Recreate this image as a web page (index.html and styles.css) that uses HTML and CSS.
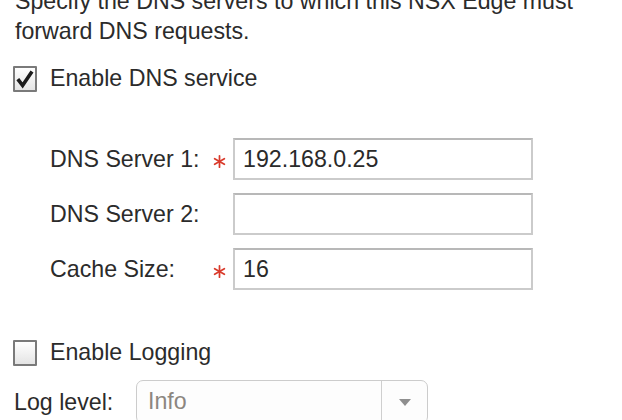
FILE: index.html
```html
<!DOCTYPE html>
<html>
<head>
<meta charset="utf-8">
<link rel="stylesheet" href="styles.css">
</head>
<body>
<div class="page">
  <p class="desc">Specify the DNS servers to which this NSX Edge must forward DNS requests.</p>

  <label class="check-row check-dns">
    <span class="box checked">
      <svg viewBox="0 0 20 20" width="20" height="20"><path d="M2.8 10.2 L7.6 16.4 L17 2.6" fill="none" stroke="#1b1b1b" stroke-width="3.6" stroke-linejoin="miter"/></svg>
    </span>
    <span>Enable DNS service</span>
  </label>

  <div class="form">
    <span class="lbl">DNS Server 1:</span>
    <span class="req"><svg viewBox="0 0 12 12" width="13" height="13"><g stroke="#d93a2b" stroke-width="1.6" stroke-linecap="round"><line x1="6" y1="0.8" x2="6" y2="11.2"/><line x1="1.5" y1="3.4" x2="10.5" y2="8.6"/><line x1="1.5" y1="8.6" x2="10.5" y2="3.4"/></g></svg></span>
    <div class="field">192.168.0.25</div>

    <span class="lbl">DNS Server 2:</span>
    <span class="req"></span>
    <div class="field"></div>

    <span class="lbl">Cache Size:</span>
    <span class="req"><svg viewBox="0 0 12 12" width="13" height="13"><g stroke="#d93a2b" stroke-width="1.6" stroke-linecap="round"><line x1="6" y1="0.8" x2="6" y2="11.2"/><line x1="1.5" y1="3.4" x2="10.5" y2="8.6"/><line x1="1.5" y1="8.6" x2="10.5" y2="3.4"/></g></svg></span>
    <div class="field">16</div>
  </div>

  <label class="check-row check-log">
    <span class="box"></span>
    <span>Enable Logging</span>
  </label>

  <div class="log-row">
    <span class="log-lbl">Log level:</span>
    <div class="select">
      <span class="sel-val">Info</span>
      <span class="sel-btn"><svg viewBox="0 0 12 8" width="12" height="8"><path d="M0 0 L12 0 L6 7 Z" fill="#8f8f8f"/></svg></span>
    </div>
  </div>
</div>
</body>
</html>
```
FILE: styles.css
```css
html, body {
  margin: 0;
  padding: 0;
  background: #ffffff;
}
.page {
  font-family: "Liberation Sans", Arial, sans-serif;
  font-size: 23.2px;
  color: #2b2b2b;
  overflow: hidden;
  height: 420px;
}
.desc {
  margin: -14px 0 0 0;
  padding-left: 15px;
  width: 590px;
  line-height: 30px;
}
.check-row {
  display: flex;
  align-items: center;
  gap: 13px;
  padding-left: 13px;
  height: 27px;
}
.check-dns {
  margin-top: 19px;
}
.box {
  box-sizing: border-box;
  width: 24px;
  height: 26px;
  border: 2px solid #7a7a7a;
  border-radius: 1px;
  background: linear-gradient(#ffffff, #e4e4e4);
  display: flex;
  align-items: center;
  justify-content: center;
}
.box svg {
  display: block;
}
.form {
  display: grid;
  grid-template-columns: 163px 20px 300px;
  row-gap: 13px;
  align-items: center;
  padding-left: 50px;
  margin-top: 46px;
}
.req {
  display: flex;
  align-items: center;
  height: 13px;
  margin-top: 4px;
}
.req svg {
  display: block;
}
.field {
  box-sizing: border-box;
  height: 42px;
  border: 2px solid #cbcbcb;
  border-top-color: #b8b8b8;
  padding-left: 8px;
  line-height: 38px;
  color: #2a2a2a;
}
.check-log {
  margin-top: 49px;
}
.log-row {
  display: flex;
  align-items: center;
  gap: 18px;
  padding-left: 14px;
  margin-top: 14px;
}
.log-lbl {
  width: 104px;
}
.select {
  box-sizing: border-box;
  width: 292px;
  height: 44px;
  border: 1.5px solid #cccccc;
  border-radius: 7px;
  display: flex;
  align-items: stretch;
  background: #fdfdfd;
}
.sel-val {
  flex: 1;
  padding-left: 11px;
  color: #8c8680;
  line-height: 40px;
}
.sel-btn {
  width: 45px;
  border-left: 1.5px solid #cfcfcf;
  display: flex;
  align-items: center;
  justify-content: center;
}
.sel-btn svg {
  display: block;
  margin-top: 2px;
}
```
